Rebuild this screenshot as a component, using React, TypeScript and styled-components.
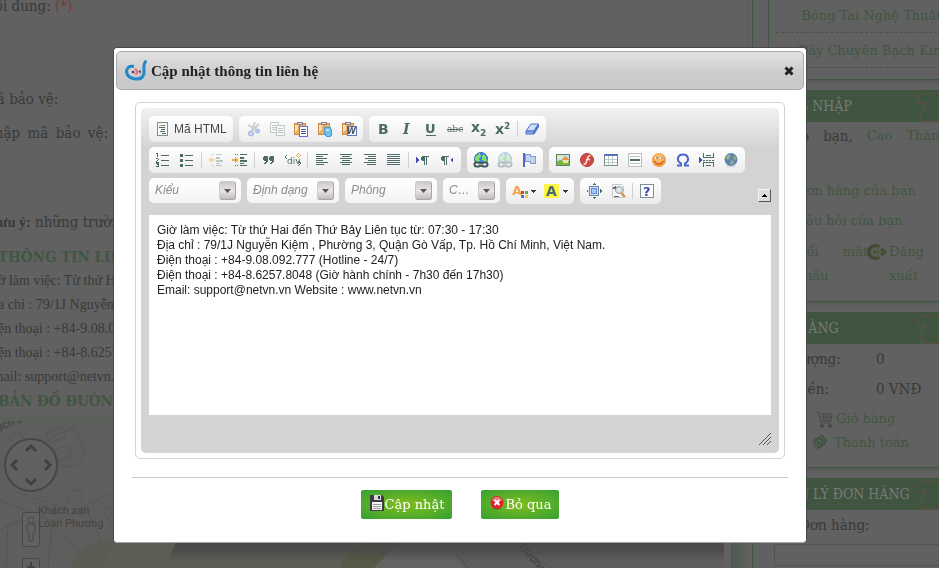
import React from "react";
import styled, { createGlobalStyle } from "styled-components";

const ink = "#393939";
const leaf = "#405640";
const teal = "#4b6a68";
const serif = `"DejaVu Serif Condensed", "DejaVu Serif", serif`;

const GlobalStyle = createGlobalStyle`
  *, *::before, *::after { box-sizing: border-box; }
  body { margin: 0; background: #616161; color: ${ink}; }
  button, select, textarea, input { font: inherit; color: inherit; margin: 0; }
`;

/* ---------- page behind the dialog ---------- */

const Viewport = styled.div`
  height: 100vh;
  overflow: hidden;
`;

const Page = styled.div`
  margin: -6px -35px 0 -24px;
  display: grid;
  grid-template-columns: minmax(0, 1fr) 206px;
  column-gap: 15px;
  font-family: ${serif};
  font-size: 15px;
  line-height: 24px;
`;

const Main = styled.main`
  border-right: 1px solid ${leaf};
  padding-right: 4px;
`;

const Article = styled.div`
  border-right: 1px solid #5a5c5a;
  display: flex;
  flex-direction: column;
  overflow: hidden;
  white-space: nowrap;
`;

const Field = styled.div<{ $space?: number }>`
  width: 132px;
  padding-left: 7px;
  margin-bottom: ${(p) => p.$space ?? 10}px;
`;

const Spread = styled(Field)`
  white-space: normal;
  text-align-last: justify;
`;

const Note = styled(Field)`
  padding-left: 14px;
`;

const Required = styled.span`
  color: #7a3a3a;
`;

const Small = styled.strong`
  font-family: "Liberation Serif", serif;
  font-size: 14px;
`;

const GreenTitle = styled.h2`
  margin: 0;
  padding-left: 22px;
  font-size: 15px;
  line-height: 24px;
  color: ${leaf};
`;

const Contact = styled.p`
  margin: 0;
  padding-left: 8px;
  font-family: "Liberation Serif", serif;
  font-size: 14px;
`;

const MapRow = styled.div`
  margin-top: 8px;
  display: grid;
  grid-template-columns: minmax(0, 1fr) 16px;
  column-gap: 7px;
  height: 160px;
  box-shadow: 0 -8px 6px -4px #5a605a;
`;

const MapEdge = styled.div`
  background: linear-gradient(90deg, #4c574c, #5f605f);
`;

const MapSvg = styled.svg`
  display: block;
  width: 100%;
  height: 100%;
  background: #5e5e5d;
  font-family: Roboto, sans-serif;
`;

const Aside = styled.aside`
  display: flex;
  flex-direction: column;
  gap: 10px;
  white-space: nowrap;
`;

const Box = styled.section<{ $height: number }>`
  min-height: ${(p) => p.$height}px;
  border-bottom: 1px solid ${leaf};
  box-shadow: 0 5px 4px -4px #4c564c;
`;

const ListBox = styled(Box)`
  border-left: 1px solid ${leaf};
  padding: 4px 7px 0;
  text-align: center;
`;

const ListItem = styled.div`
  height: 35px;
  line-height: 34px;
  border-bottom: 1px dashed ${leaf};
`;

const PageLink = styled.a`
  color: ${leaf};
  text-decoration: none;
  font-family: "DejaVu Serif", serif;
  font-size: 13px;
`;

const BoxTitle = styled.h3`
  margin: 0;
  height: 32px;
  padding-right: 25px;
  display: flex;
  align-items: center;
  justify-content: space-between;
  background: #3f5540;
  color: #777a77;
  font-size: 14px;
  font-weight: normal;
  line-height: 30px;
`;

const Greeting = styled.p`
  margin: 2px 0 27px;
  padding-left: 6px;
  display: flex;
  gap: 14px;
`;

const Entry = styled.div`
  padding-left: 28px;
  height: 30px;
  line-height: 30px;
`;

const Account = styled.div`
  padding: 5px 0 0 28px;
  display: grid;
  grid-template-columns: 71px 22px 1fr;
  line-height: 24px;
  svg { margin-top: 4px; }
`;

const TwoLines = styled(PageLink)`
  white-space: normal;
  width: 72px;
  text-align: justify;
`;

const Short = styled(TwoLines)`
  width: 40px;
`;

const Totals = styled.dl`
  margin: 0 0 3px;
  padding: 0 0 0 8px;
  display: grid;
  grid-template-columns: 100px 1fr;
  line-height: 30px;
  dd { margin: 0; }
`;

const Shop = styled.div<{ $indent: number }>`
  padding-left: ${(p) => p.$indent}px;
  display: flex;
  align-items: center;
  gap: 3px;
`;

const SearchLabel = styled.label`
  display: block;
  padding: 3px 0 0 31px;
`;

const Search = styled.input`
  display: block;
  margin: 7px 0 0 6px;
  width: 190px;
  height: 22px;
  background: transparent;
  border: 1px solid #525252;
`;

/* ---------- dialog ---------- */

const Layer = styled.div`
  position: fixed;
  inset: 0;
  padding: 48px 19px 0 0;
  display: flex;
  justify-content: center;
  align-items: flex-start;
`;

const Dialog = styled.section`
  width: 100%;
  max-width: 692px;
  padding: 3px 2px 23px;
  background: #fff;
  border-radius: 3px;
  box-shadow: 0 1px 0 #a2a2a2, 0 0 0 1px #4a4a4a;
`;

const Header = styled.header`
  height: 39px;
  padding: 0 9px 0 8px;
  display: flex;
  align-items: center;
  gap: 4px;
  border: 1px solid #aaa;
  border-radius: 5px;
  background: linear-gradient(#e2e2e2, #cbcbcb 60%, #c9c9c9);
`;

const Title = styled.h1`
  margin: 0;
  flex: 1;
  font: bold 15px/20px "Liberation Serif", serif;
  color: #222;
`;

const Close = styled.button`
  display: flex;
  padding: 0;
  border: 0;
  background: none;
`;

const Frame = styled.div`
  margin: 12px 19px 0;
  padding: 5px;
  border: 1px solid #d3d3d3;
  border-radius: 5px;
`;

const Editor = styled.div`
  padding: 8px 8px 0;
  border-radius: 5px;
  background: linear-gradient(#f1f1f1, #d3d3d3 40px);
  font: 12px/15px "Liberation Sans", Arial, sans-serif;
`;

const EditorHead = styled.div`
  display: flex;
  align-items: flex-end;
  padding-bottom: 11px;
`;

const Toolbars = styled.div`
  flex: 1;
  display: flex;
  flex-direction: column;
  gap: 5px;
`;

const ToolRow = styled.div`
  display: flex;
  gap: 6px;
`;

const Group = styled.div`
  height: 26px;
  padding: 2px;
  display: flex;
  align-items: center;
  border-radius: 5px;
  background: linear-gradient(#fff, #ececec);
`;

const Tool = styled.button<{ $off?: boolean }>`
  height: 22px;
  padding: 0 4px;
  display: flex;
  align-items: center;
  gap: 3px;
  border: 0;
  background: none;
  color: #474747;
  opacity: ${(p) => (p.$off ? 0.32 : 1)};
`;

const Separator = styled.span`
  width: 1px;
  height: 16px;
  margin: 0 2px;
  background: #d0d0d0;
`;

const ComboBox = styled.div<{ $width: number }>`
  width: ${(p) => p.$width}px;
  height: 25px;
  display: grid;
  align-items: center;
  border-radius: 5px;
  background: linear-gradient(#fff, #f4f4f4);
`;

const Combo = styled.select`
  grid-area: 1 / 1;
  width: 100%;
  height: 25px;
  padding: 0 28px 0 6px;
  appearance: none;
  border: 0;
  background: none;
  color: #8c8c8c;
  font-style: italic;
  text-overflow: ellipsis;
`;

const ComboArrow = styled.span`
  grid-area: 1 / 1;
  justify-self: end;
  width: 17px;
  height: 19px;
  margin-right: 5px;
  display: flex;
  align-items: center;
  justify-content: center;
  border: 1px solid #a9a4a4;
  border-top-color: #cfcaca;
  border-left-color: #cfcaca;
  border-radius: 3px;
  background: linear-gradient(#cfc8c8, #eae5e5 50%, #c4bcbc);
  pointer-events: none;
`;

const Collapser = styled.button`
  width: 13px;
  height: 13px;
  margin-bottom: 2px;
  padding: 0;
  display: flex;
  align-items: center;
  justify-content: center;
  background: #dcdcdc;
  border: 1px solid #f5f5f5;
  border-right-color: #555;
  border-bottom-color: #555;
`;

const Content = styled.textarea`
  display: block;
  width: 100%;
  height: 200px;
  padding: 8px;
  border: 0;
  resize: none;
  outline: 0;
  background: #fff;
  color: #222;
`;

const EditorFoot = styled.div`
  height: 38px;
  padding-bottom: 8px;
  display: flex;
  align-items: flex-end;
  justify-content: flex-end;
`;

const Rule = styled.hr`
  margin: 18px 16px 12px;
  border: 0;
  border-top: 1px solid #c9c9c9;
`;

const Actions = styled.footer`
  display: flex;
  justify-content: center;
  gap: 29px;
`;

const Action = styled.button`
  height: 29px;
  padding: 0 8px 0 9px;
  display: flex;
  align-items: center;
  gap: 1px;
  border: 0;
  border-radius: 2px;
  background: radial-gradient(ellipse at center, #82bd1d, #34a133);
  color: #fff;
  font: 13px/18px "DejaVu Serif", serif;
  svg { margin-bottom: 3px; }
`;

/* ---------- icons ---------- */

type Kids = { children: React.ReactNode; w?: number };
const Ico = ({ children, w = 16 }: Kids) => (
  <svg width={w} height="16" viewBox={`0 0 ${w} 16`} shapeRendering="crispEdges" aria-hidden="true">
    {children}
  </svg>
);

const Lines = ({ rows, color = teal, h = 1 }: { rows: number[][]; color?: string; h?: number }) => (
  <>
    {rows.map(([x, y, w], i) => (
      <rect key={i} x={x} y={y} width={w} height={h} fill={color} />
    ))}
  </>
);

const Board = () => (
  <>
    <rect x="1.500" y="2.500" width="11" height="11" rx="1" fill="#eeae62" stroke="#c98a4a" strokeWidth="1" />
    <path d="M2 4h3v4l-3 3z" fill="#fcdcaa" />
    <path d="M4 1h6v3H4z" fill="#85808a" />
    <path d="M5 2h4v1H5z" fill="#e4e4ea" />
  </>
);

const Glyph = ({ t, x, y, size, family = "DejaVu Sans", italic, color = teal }: any) => (
  <text x={x} y={y} fontSize={size} fontWeight="bold" fontStyle={italic ? "italic" : "normal"} fontFamily={family} fill={color}>
    {t}
  </text>
);

const Para = ({ x }: { x: number }) => (
  <g fill={teal}>
    <rect x={x + 1} y="4" width="7" height="1" />
    <rect x={x} y="5" width="4" height="3" />
    <rect x={x + 1} y="8" width="3" height="1" />
    <rect x={x + 3} y="5" width="1" height="8" />
    <rect x={x + 5} y="4" width="1" height="9" />
  </g>
);

const Globe = () => (
  <>
    <circle cx="8" cy="7" r="6.500" fill="#3f86dc" stroke="#3b6ba4" shapeRendering="auto" />
    <path d="M3 4l4-3 1 3-2 2 1 3-3 1-2-3zM10 2l3 3 1 4-3 1-2-3z" fill="#7fe06c" />
  </>
);

const Chain = () => (
  <g fill="none" shapeRendering="auto">
    <rect x="1.500" y="10.500" width="6" height="4" rx="2" fill="#fff" stroke="#3d5557" strokeWidth="2" />
    <rect x="8.500" y="10.500" width="6" height="4" rx="2" fill="#fff" stroke="#3d5557" strokeWidth="2" />
    <path d="M5 12.500h6" stroke="#9fb0b0" />
  </g>
);

const icons: Record<string, React.ReactNode> = {
  source: (
    <>
      <path d="M2 1h11v14H2z" fill="#7b9392" />
      <path d="M3 2h9v12H3z" fill="#f6faf9" />
      <Lines rows={[[6, 4, 4], [4, 6, 6], [6, 8, 4], [5, 10, 5], [7, 12, 4]]} />
      <Lines rows={[[4, 4, 2], [7, 4, 1]]} color="#e7c373" />
    </>
  ),
  cut: (
    <g shapeRendering="auto">
      <path d="M10 1L7 10M3 4l9 5M14 3L8 9" stroke="#6a7687" strokeWidth="2" />
      <circle cx="6" cy="12.500" r="2" fill="none" stroke="#2a4cc0" strokeWidth="2" />
      <circle cx="12.500" cy="10" r="1.500" fill="none" stroke="#2a4cc0" strokeWidth="2" />
    </g>
  ),
  copy: (
    <>
      <path d="M1.500 1.500h8v10h-8z" fill="#fff" stroke="#587170" />
      <Lines rows={[[3, 4, 4], [3, 6, 4], [3, 8, 4]]} />
      <path d="M7.500 4.500h8v10h-8z" fill="#fff" stroke="#587170" />
      <Lines rows={[[9, 7, 5], [9, 9, 5], [9, 11, 5]]} />
    </>
  ),
  paste: (
    <>
      <Board />
      <path d="M6 5h9v11H6z" fill="#5a72cc" />
      <path d="M7 6h7v9H7z" fill="#fff" />
      <Lines rows={[[8, 8, 5], [8, 10, 5], [8, 12, 5]]} color="#4055a8" />
    </>
  ),
  pasteText: (
    <>
      <Board />
      <path d="M7 7l6-1 2 4-1 5H9l-2-3z" fill="#6fc3ea" stroke="#4d9cc8" />
      <path d="M9 8h3v2H9z" fill="#b8e5f8" />
    </>
  ),
  pasteWord: (
    <>
      <Board />
      <path d="M6 5h10v10H6z" fill="#5a72b8" />
      <path d="M7 6h8v8H7z" fill="#fff" />
      <Glyph t="W" x={6} y={13} size={8} italic color="#4a5668" />
    </>
  ),
  bold: <Glyph t="B" x={3} y={13} size={14} />,
  italic: <Glyph t="I" x={4} y={13} size={14} family="DejaVu Serif" italic />,
  underline: (
    <>
      <Glyph t="U" x={2} y={12} size={13} />
      <rect x="3" y="14" width="10" height="1" fill={teal} />
    </>
  ),
  strike: (
    <>
      <text x="0" y="11" fontSize="9" fontFamily="DejaVu Serif" fill="#666">abc</text>
      <rect x="0" y="8" width="16" height="1" fill={teal} />
    </>
  ),
  sub: (
    <>
      <Glyph t="x" x={0} y={11} size={14} />
      <Glyph t="2" x={9} y={15} size={9} />
    </>
  ),
  sup: (
    <>
      <Glyph t="x" x={0} y={13} size={14} />
      <Glyph t="2" x={9} y={8} size={9} />
    </>
  ),
  eraser: (
    <g shapeRendering="auto">
      <path d="M2 10L7 3h7.500l-4.500 7z" fill="#cfe0f8" stroke="#4c72c8" />
      <path d="M2 10h8v3H2z" fill="#86abed" stroke="#4c72c8" />
      <path d="M10 10l4.500-7v3L10 13z" fill="#5c86dc" stroke="#4c72c8" />
    </g>
  ),
  numbered: (
    <>
      <Lines rows={[[6, 3, 8], [6, 8, 8], [6, 13, 8]]} />
      <path d="M1 1h2v4H2V2H1zM1 6h2v1h1v1H3v1H2v1h2v1H1V9h1V8h1V7H1zM1 11h3v4H1v-1h2v-1H2v-1h1v-0H1z" fill={teal} />
    </>
  ),
  bulleted: (
    <>
      <Lines rows={[[6, 3, 8], [6, 8, 8], [6, 13, 8]]} />
      <Lines rows={[[1, 2, 3], [1, 7, 3], [1, 12, 3]]} h={3} />
    </>
  ),
  outdent: (
    <>
      <Lines rows={[[3, 2, 1], [5, 2, 1], [8, 2, 6], [8, 5, 4], [8, 8, 7], [8, 11, 4], [3, 13, 1], [5, 13, 1], [8, 13, 6]]} />
      <Lines rows={[[8, 6, 4], [8, 9, 7]]} />
      <path d="M0 8l4-3v2h3v2H4v2z" fill="#f09020" />
    </>
  ),
  indent: (
    <>
      <Lines rows={[[3, 2, 1], [5, 2, 1], [8, 2, 7], [8, 5, 4], [8, 6, 4], [8, 8, 7], [8, 9, 7], [8, 11, 4], [3, 13, 1], [5, 13, 1], [8, 13, 7]]} />
      <path d="M6 8L3 5v2H0v2h3v2z" fill="#f3a43c" />
    </>
  ),
  quote: (
    <path d="M3 4h4v5L5 12H3l2-3H3L2 8V5zM9 4h4v5l-2 3H9l2-3H9L8 8V5z" fill={teal} />
  ),
  div: (
    <>
      <text x="2" y="12" fontSize="9" fontFamily="DejaVu Sans" fill={teal}>div</text>
      <path d="M2 3L0 5l2 2M13 9l3 2-3 3" fill="none" stroke={teal} />
      <path d="M13.500 1.500l2 2-2 2-2-2z" fill="none" stroke="#f0a44c" />
    </>
  ),
  left: <Lines rows={[[2, 2, 12], [2, 4, 7], [2, 6, 11], [2, 8, 7], [2, 10, 12], [2, 12, 8]]} />,
  center: <Lines rows={[[2, 2, 12], [4, 4, 8], [2, 6, 12], [4, 8, 8], [2, 10, 12], [4, 12, 8]]} />,
  right: <Lines rows={[[2, 2, 12], [6, 4, 8], [3, 6, 11], [6, 8, 8], [2, 10, 12], [5, 12, 9]]} />,
  justify: <Lines rows={[[1, 2, 13], [1, 4, 13], [1, 6, 13], [1, 8, 13], [1, 10, 13], [1, 12, 13]]} />,
  ltr: (
    <>
      <path d="M1 5v6l3-3z" fill="#4850b8" />
      <Para x={6} />
    </>
  ),
  rtl: (
    <>
      <path d="M14 5v6l-3-3z" fill="#4850b8" />
      <Para x={2} />
    </>
  ),
  link: (<><Globe /><Chain /></>),
  flag: (
    <>
      <path d="M2 1h2v14H2z" fill="#5566c4" />
      <path d="M4 2h5v2h5v7h-5V9H4z" fill="#c4d4ec" stroke="#8598cc" />
    </>
  ),
  image: (
    <>
      <path d="M1 2h14v12H1z" fill="#647d70" />
      <path d="M2 3h12v10H2z" fill="#bfe6ee" />
      <path d="M2 9l4-1 3 2 5-1v4H2z" fill="#78b83c" />
      <path d="M3 4h3v2H3z" fill="#fff08a" />
      <path d="M8 8h5v3H8z" fill="#f8dcae" />
      <path d="M7 8l3-4 4 4z" fill="#ee9048" />
    </>
  ),
  flash: (
    <g shapeRendering="auto">
      <circle cx="8" cy="8" r="6.500" fill="#cf4a42" stroke="#b03c38" />
      <path d="M11.500 3.500c-3 0-3 3-4 6-.5 2-1 3-3 3M7 7.500h4" fill="none" stroke="#f7e4e2" strokeWidth="1.500" />
    </g>
  ),
  table: (
    <>
      <path d="M1 2h14v12H1z" fill="#7a8f8e" />
      <path d="M2 4h12v9H2z" fill="#fff" />
      <path d="M1 2h14v2H1z" fill="#5a70bc" />
      <path d="M2 7.500h12M2 10.500h12M5.500 4v9M9.500 4v9" stroke="#c0caca" />
    </>
  ),
  hr: (
    <>
      <path d="M1 1h14v14H1z" fill="#bcc0c0" />
      <path d="M2 2h12v12H2z" fill="#fbfbfb" />
      <Lines rows={[[3, 4, 10], [3, 11, 10]]} color="#bcc4c4" />
      <Lines rows={[[3, 7, 10]]} h={2} />
    </>
  ),
  smiley: (
    <g shapeRendering="auto">
      <circle cx="8" cy="8" r="7" fill="#f79a3e" />
      <circle cx="8" cy="6" r="5" fill="#fbb768" />
      <path d="M4 6h3M9 6h3" stroke="#fff" strokeWidth="2" />
      <path d="M5 6h2M10 6h2" stroke="#444" />
      <path d="M4 9c1 4 7 4 8 0" fill="none" stroke="#a9441b" />
    </g>
  ),
  omega: (
    <path d="M2 13.500h4v-2C1 9 2.500 2.500 8 2.500S15 9 10 11.500v2h4" fill="none" stroke="#4c64cc" strokeWidth="2" shapeRendering="auto" />
  ),
  pagebreak: (
    <>
      <path d="M4 1h1v4h9V1h1v5H4zM4 10h11v5h-1v-4H5v4H4z" fill={teal} />
      <Lines rows={[[7, 3, 5], [4, 8, 2], [7, 8, 2], [10, 8, 2], [13, 8, 2], [7, 13, 5]]} />
      <path d="M0 5v6l3-3z" fill="#4850b8" />
    </>
  ),
  earth: (
    <g shapeRendering="auto">
      <ellipse cx="8" cy="14" rx="5" ry="1.500" fill="#ddd" />
      <circle cx="8" cy="7.500" r="6.500" fill="#5f82b4" />
      <path d="M3 4l4-2 1 3-3 3-2-1zM8 8l3 1-1 4-3-1zM11 3l3 3-2 3-2-3z" fill="#8fae88" />
    </g>
  ),
  maximize: (
    <>
      <path d="M3 3h10v10H3z" fill="#6d87a0" />
      <path d="M4 4h8v8H4z" fill="#d4e4fb" />
      <path d="M5 5h6v6H5z" fill="#5b8ae8" />
      <path d="M6 6h4v4H6z" fill="#a6c6f8" />
      <path d="M8 0l2 2H6zM8 16l2-2H6zM0 8l2-2v4zM16 8l-2-2v4z" fill={teal} />
    </>
  ),
  blocks: (
    <>
      <path d="M2 1h9l3 3v11H2z" fill="#c4c8c8" />
      <path d="M3 2h8l2 2v10H3z" fill="#fbfbfb" />
      <path d="M3 4h4v2H3zM5 3h1v5H5zM4 13h5v1H4z" fill={teal} />
      <circle cx="9" cy="7" r="3.500" fill="#dfe8ea" stroke="#8e9a9c" shapeRendering="auto" />
      <path d="M11 10l4 4" stroke="#d98734" strokeWidth="2" shapeRendering="auto" />
    </>
  ),
  help: (
    <>
      <path d="M1 1h14v14H1z" fill="#7b9191" />
      <path d="M2 2h12v12H2z" fill="#fcfcfc" />
      <Glyph t="?" x={4} y={13} size={13} color="#4348b4" />
    </>
  ),
  textColor: (
    <>
      <Glyph t="A" x={0} y={12} size={13} color="#f3a858" />
      <path d="M9 8h3v3H9z" fill="#d84432" />
      <path d="M13 8h3v3h-3z" fill="#55b14d" />
      <path d="M9 12h3v3H9z" fill="#3d78d8" />
      <path d="M13 12h3v3h-3z" fill="#f1cb44" />
    </>
  ),
  bgColor: (
    <>
      <path d="M0 1h15v14H0z" fill="#fdf748" />
      <Glyph t="A" x={2} y={13} size={14} />
    </>
  ),
};
icons.unlink = icons.link;

const Caret = () => (
  <svg width="5" height="3" viewBox="0 0 5 3" shapeRendering="crispEdges" aria-hidden="true">
    <path d="M0 0h5L2.500 3z" fill="#333" />
  </svg>
);

const off = new Set(["cut", "copy", "outdent", "unlink"]);
const Bar = ({ items }: { items: string }) => (
  <Group>
    {items.split(" ").map((id, i) =>
      id === "|" ? (
        <Separator key={i} />
      ) : (
        <Tool key={id} type="button" aria-label={id} $off={off.has(id)}>
          <Ico>{icons[id]}</Ico>
          {id.endsWith("Color") && <Caret />}
        </Tool>
      )
    )}
  </Group>
);

const Picker = ({ label, width = 92 }: { label: string; width?: number }) => (
  <ComboBox $width={width}>
    <Combo aria-label={label}>
      <option>{label}</option>
    </Combo>
    <ComboArrow>
      <svg width="7" height="4" viewBox="0 0 7 4" aria-hidden="true">
        <path d="M0 0h7L3.500 4z" fill="#555" />
      </svg>
    </ComboArrow>
  </ComboBox>
);

const Logo = () => (
  <svg width="22" height="21" viewBox="0 0 22 21" fill="none" aria-hidden="true">
    <path d="M9 6.500C4 5.500 1.500 8 1.500 12c.5 4 4.500 7 9.500 7 6 0 8.500-3 8-8-.2-4-.8-8.500 2.500-10" stroke="#2389cc" strokeWidth="3" />
    <path d="M4 12c2-4 10-4 12 0-2 4-10 4-12 0z" fill="#d8d3d6" />
    <path d="M9 9l2-1 3 4-2 3-3-1 2-2z" fill="#e2708f" />
    <circle cx="8" cy="12" r="1.300" fill="#444" />
    <path d="M13 11l3-1v4z" fill="#666" />
  </svg>
);

const Shirt = () => (
  <svg width="34" height="32" viewBox="0 0 34 32" fill="none" stroke="#664f45" aria-hidden="true">
    <path d="M7 31l-2-4 5-15-6 2-3-7C6 3 12 4 15 2c2 3 7 3 9 0 3 1 6 2 9 6l-4 7-4-2 1 18z" />
  </svg>
);

const Cart = () => (
  <svg width="18" height="18" viewBox="0 0 18 18" fill="none" stroke="#4b4b4b" aria-hidden="true">
    <path d="M0 2h3l3 11h10M4 4h13l-1 7H6M8 5l1 6M11 5v6M14 5v6M5 7h12" />
    <circle cx="7" cy="16" r="1.500" fill="#444" />
    <circle cx="15" cy="16" r="1.500" fill="#444" />
  </svg>
);

const Money = () => (
  <svg width="19" height="18" viewBox="0 0 19 18" aria-hidden="true">
    <path d="M1 7L10 1l5 6-9 7z" fill="#4a5a4a" stroke="#3b4b3b" />
    <path d="M1 11l4 5 9-7" fill="none" stroke="#3b4b3b" />
    <circle cx="8" cy="7" r="2" fill="#586658" stroke="#3b4b3b" />
  </svg>
);

const Exit = () => (
  <svg width="20" height="16" viewBox="0 0 20 16" fill="none" aria-hidden="true">
    <path d="M12 3.500a6 6 0 1 0 0 9" stroke="#3f4a32" strokeWidth="4" />
    <path d="M12 4a5 5 0 1 0 0 8" stroke="#55613f" />
    <path d="M6 8h9" stroke="#3f4a32" strokeWidth="3" />
    <path d="M14 3l6 5-6 5z" fill="#3f4a32" />
    <path d="M7 8h10" stroke="#5b6b45" />
  </svg>
);

const Map = () => (
  <MapSvg>
    <g transform="translate(24 -421)" fill="none">
      <g stroke="#565654">
        <path d="M0 500l52 21 22-8 8-15c4-8-8-12-12-4l-6 14-48-16M72 421l10 24c6 14-6 24-18 21l-14-5M40 421l14 15 20-9M4 441l14-10 6 8M46 433l16-6 4 10-16 6zM54 450l14-5 4 11-14 5zM0 530l24-12M6 568l2-45 25 2M74 511l38-18M86 508l28 60M52 524l-4 44M102 510l12-4M60 530l30 36M104 512l14 22" />
      </g>
      <path d="M70 568c8-20 24-30 44-26h36l-10 26z" fill="#585c52" />
      <path d="M114 542h290l-32 26H100z" fill="#5b5e55" />
      <path d="M340 568c6-20 22-26 46-26h20l-30 26z" fill="#585846" />
      <path d="M398 543l-24 25h90l-18-25z" fill="#646464" />
      <path d="M446 542l22 26M510 542l40 26" stroke="#515151" />
      <defs>
        <linearGradient id="shade" x1="0" y1="0" x2="0" y2="1">
          <stop offset="0" stopColor="#474847" />
          <stop offset="0.500" stopColor="#474847" stopOpacity="0.850" />
          <stop offset="1" stopColor="#474847" stopOpacity="0" />
        </linearGradient>
      </defs>
      <path d="M178 536h546v26H168z" fill="url(#shade)" />
      <circle cx="31" cy="465" r="26" fill="#616161" stroke="#474747" strokeWidth="2" />
      <path d="M26 451l5-5 5 5M26 479l5 5 5-5M17 460l-5 5 5 5M45 460l5 5-5 5" stroke="#414141" strokeWidth="3" />
      <g stroke="#484848">
        <rect x="22.500" y="512.500" width="17" height="34" rx="2" fill="#616161" />
        <circle cx="31" cy="520" r="3" />
        <path d="M27 524h8v9h-2v8h-4v-8h-2z" />
        <rect x="22.500" y="558.500" width="17" height="20" rx="2" fill="#616161" />
      </g>
      <path d="M31 562v10M27 567h8" stroke="#444" strokeWidth="2" />
      <g fill="#424242" fontSize="11">
        <text x="38" y="514">Khách sạn</text>
        <text x="38" y="527">Loan Phượng</text>
        <text x="-2" y="431" transform="rotate(-20 -2 431)">ạch Đ</text>
        <text x="518" y="546" transform="rotate(50 518 546)">Trương</text>
      </g>
    </g>
  </MapSvg>
);

const contact = [
  "Giờ làm việc: Từ thứ Hai đến Thứ Bảy Liên tục từ: 07:30 - 17:30",
  "Địa chỉ : 79/1J Nguyễn Kiệm , Phường 3, Quận Gò Vấp, Tp. Hồ Chí Minh, Việt Nam.",
  "Điện thoại : +84-9.08.092.777 (Hotline - 24/7)",
  "Điện thoại : +84-8.6257.8048 (Giờ hành chính - 7h30 đến 17h30)",
  "Email: support@netvn.vn Website : www.netvn.vn",
];

export default function App() {
  return (
    <>
      <GlobalStyle />
      <Viewport>
        <Page>
          <Main>
            <Article>
              <Field $space={69}>Nội dung: <Required>(*)</Required></Field>
              <Field>Mã bảo vệ:</Field>
              <Spread $space={65}>Nhập mã bảo vệ:</Spread>
              <Note>
                <Small>Lưu ý:</Small> những trường có dấu
              </Note>
              <GreenTitle>THÔNG TIN LIÊN HỆ</GreenTitle>
              {contact.map((line) => <Contact key={line}>{line}</Contact>)}
              <GreenTitle>BẢN ĐỒ ĐƯỜNG ĐI</GreenTitle>
              <MapRow>
                <Map />
                <MapEdge />
              </MapRow>
            </Article>
          </Main>
          <Aside>
            <ListBox $height={86}>
              <ListItem><PageLink href="#">Bông Tai Nghệ Thuật</PageLink></ListItem>
              <ListItem><PageLink href="#">Dây Chuyền Bạch Kim</PageLink></ListItem>
            </ListBox>
            <Box $height={212}>
              <BoxTitle>ĐĂNG NHẬP<Shirt /></BoxTitle>
              <Greeting>
                <span>Chào</span><span>bạn,</span>
                <PageLink href="#">Cao</PageLink><PageLink href="#">Thành</PageLink>
              </Greeting>
              <Entry><PageLink href="#">Đơn hàng của bạn</PageLink></Entry>
              <Entry><PageLink href="#">Câu hỏi của bạn</PageLink></Entry>
              <Account>
                <TwoLines href="#">Đổi mật khẩu</TwoLines>
                <Exit />
                <Short href="#">Đăng xuất</Short>
              </Account>
            </Box>
            <Box $height={156}>
              <BoxTitle>GIỎ HÀNG<Shirt /></BoxTitle>
              <Totals>
                <dt>Số lượng:</dt><dd>0</dd>
                <dt>Số tiền:</dt><dd>0 VNĐ</dd>
              </Totals>
              <Shop $indent={47}><Cart /><PageLink href="#">Giỏ hàng</PageLink></Shop>
              <Shop $indent={44}><Money /><PageLink href="#">Thanh toán</PageLink></Shop>
            </Box>
            <Box $height={110}>
              <BoxTitle>QUẢN LÝ ĐƠN HÀNG<Shirt /></BoxTitle>
              <SearchLabel htmlFor="order">Đơn hàng:</SearchLabel>
              <Search id="order" />
            </Box>
          </Aside>
        </Page>
      </Viewport>

      <Layer>
        <Dialog role="dialog" aria-labelledby="dialog-title">
          <Header>
            <Logo />
            <Title id="dialog-title">Cập nhật thông tin liên hệ</Title>
            <Close type="button" aria-label="Đóng">
              <svg width="10" height="10" viewBox="0 0 10 10" aria-hidden="true">
                <path d="M1.500 1.500l7 7M8.500 1.500l-7 7" stroke="#222" strokeWidth="3" />
              </svg>
            </Close>
          </Header>
          <Frame>
            <Editor>
              <EditorHead>
                <Toolbars>
                  <ToolRow>
                    <Group>
                      <Tool type="button"><Ico>{icons.source}</Ico>Mã HTML</Tool>
                    </Group>
                    <Bar items="cut copy paste pasteText pasteWord" />
                    <Bar items="bold italic underline strike sub sup | eraser" />
                  </ToolRow>
                  <ToolRow>
                    <Bar items="numbered bulleted | outdent indent | quote div | left center right justify | ltr rtl" />
                    <Bar items="link unlink flag" />
                    <Bar items="image flash table hr smiley omega pagebreak earth" />
                  </ToolRow>
                  <ToolRow>
                    <Picker label="Kiểu" />
                    <Picker label="Định dạng" />
                    <Picker label="Phông" />
                    <Picker label="Cỡ chữ" width={57} />
                    <Bar items="textColor bgColor" />
                    <Bar items="maximize blocks | help" />
                  </ToolRow>
                </Toolbars>
                <Collapser type="button" aria-label="Thu gọn thanh công cụ">
                  <svg width="5" height="3" viewBox="0 0 5 3" shapeRendering="crispEdges" aria-hidden="true">
                    <path d="M0 3h5L2.500 0z" fill="#000" />
                  </svg>
                </Collapser>
              </EditorHead>
              <Content aria-label="Nội dung" spellCheck={false} defaultValue={contact.join("\n")} />
              <EditorFoot>
                <svg width="12" height="12" viewBox="0 0 12 12" aria-hidden="true">
                  <path d="M0 12L12 0M4 12l8-8M8 12l4-4" stroke="#555" />
                </svg>
              </EditorFoot>
            </Editor>
          </Frame>
          <Rule />
          <Actions>
            <Action type="button">
              <svg width="14" height="16" viewBox="0 0 14 16" aria-hidden="true">
                <path d="M0 0h12l2 2v14H0z" fill="#3c3c42" />
                <path d="M4 0h7v5H4z" fill="#d9dadf" />
                <path d="M8 1h2v3H8z" fill="#33333a" />
                <path d="M2 7h10v8H2z" fill="#f3f3f3" />
                <path d="M3 9.500h8M3 11.500h8M3 13.500h8" stroke="#9a9aa0" />
              </svg>
              Cập nhật
            </Action>
            <Action type="button">
              <svg width="14" height="14" viewBox="0 0 14 14" aria-hidden="true">
                <ellipse cx="7" cy="12.500" rx="5" ry="1.500" fill="#4b7a22" opacity="0.500" />
                <circle cx="7" cy="6.500" r="6.500" fill="#e0202c" />
                <path d="M2 5a5 4 0 0 1 10 0z" fill="#f2787c" />
                <path d="M4.500 4l5 5M9.500 4l-5 5" stroke="#fff" strokeWidth="2" />
              </svg>
              Bỏ qua
            </Action>
          </Actions>
        </Dialog>
      </Layer>
    </>
  );
}
